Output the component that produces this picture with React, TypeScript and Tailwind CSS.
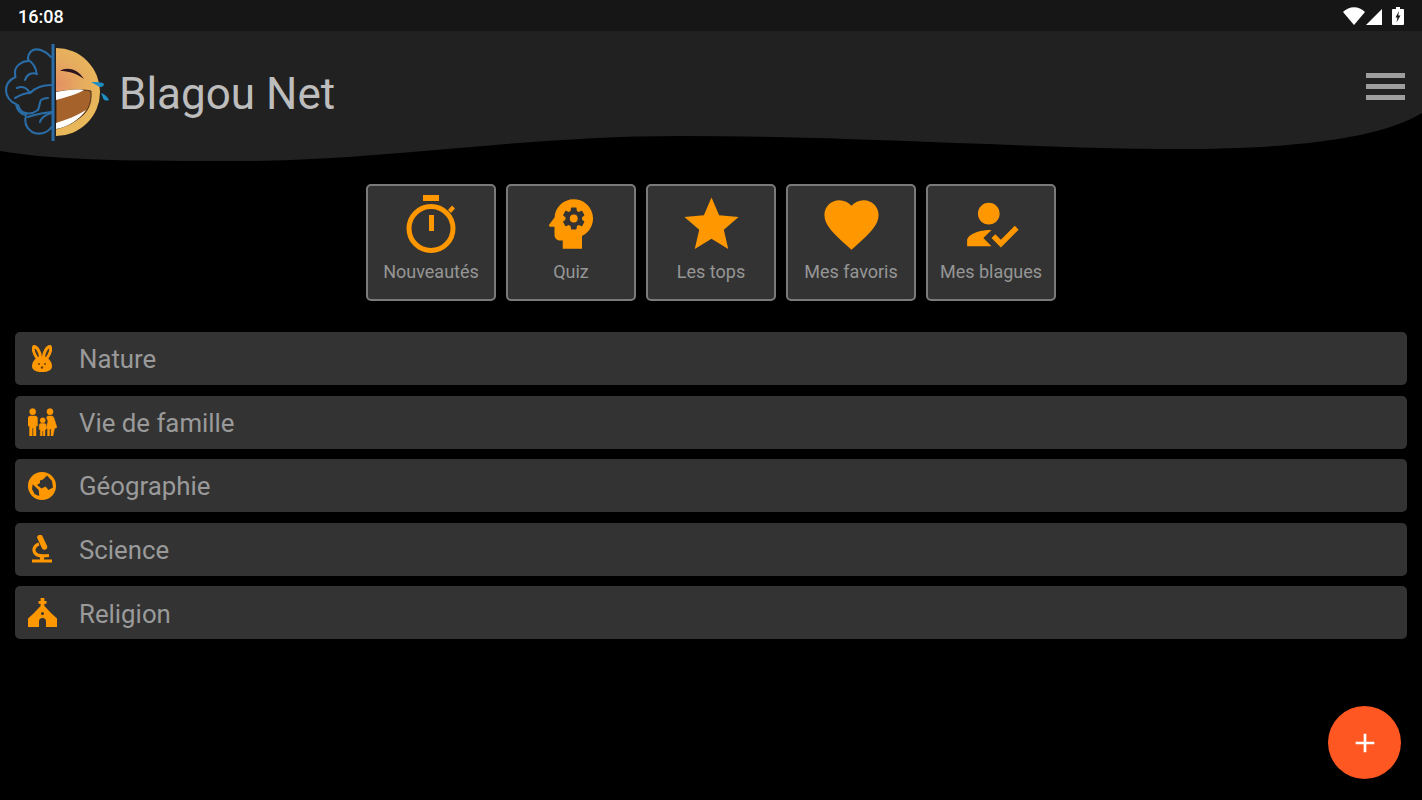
import { MdAdd, MdFavorite, MdHowToReg, MdPsychology, MdStar } from 'react-icons/md';

function Logo() {
  return (
    <svg width="120" height="115" viewBox="0 0 120 115" fill="none">
      <defs>
        <radialGradient id="cheek" cx="56" cy="50" r="46" gradientUnits="userSpaceOnUse">
          <stop offset="0" stopColor="#e38f63" />
          <stop offset="0.55" stopColor="#e6ab5f" />
          <stop offset="1" stopColor="#e9b85a" />
        </radialGradient>
      </defs>
      {/* brain */}
      <g stroke="#2a6ca6" strokeWidth="2.1" strokeLinecap="round" strokeLinejoin="round">
        <path d="M51 22C46 16 38 13 33 15C29 17 27 22 28.5 26C22 26 15 31 15 37C15 39 15 41 15.5 42C9 45 6 50 6 55C6 61 10 67 16 69C17 75 21 79 26 80C24 87 26 93 32 97C38 100 47 99 51.5 92" />
        <path d="M28.5 25C33 28 36 32 36.7 39" />
        <path d="M36.7 39C32 37 27 39 25 45" />
        <path d="M51.5 50C42 50 35 53 30 58C28 54 23 50 17 53" />
        <path d="M30 58C25 58 20 60 15 63" />
        <path d="M18 70C20 79 30 81 38 75C40 70 40 66 41 65C44 63 46 63 48 63" />
        <path d="M51.5 77C44 78 35 79 28 82" />
        <path d="M51.5 78C45 80 41 83 40 87" />
      </g>
      <path d="M53 9V106" stroke="#2a6ca6" strokeWidth="3" />
      {/* face */}
      <path d="M56 13A44 44 0 0 1 56 101Z" fill="url(#cheek)" />
      <path d="M56 57C70 55 82 54 91 56C92 70 87 78 78 84C70 90 63 92 56 94Z" fill="#a5622a" stroke="#2a1a10" strokeWidth="0.8" />
      <path d="M56 57C66 55 76 54 84 55C76 60 66 62 56 65Z" fill="#fff" />
      <path d="M56 88C66 85 76 81 86 75C80 84 68 92 56 94Z" fill="#fff" />
      <path d="M60 36C66 32 77 33 84 44C76 38 68 36 60 36Z" fill="#2a1420" />
      {/* tears */}
      <path d="M91 47C96 47 102 47 104 49C104 52 100 53 98 51Z" fill="#1d8fc4" />
      <path d="M101 58C104 59 108 62 109 65C107 66 104 66 103 63Z" fill="#1d8fc4" />
    </svg>
  );
}

function Stopwatch() {
  return (
    <svg width="52" height="58" viewBox="0 0 52 58" fill="#ff9800">
      <rect x="18" y="0" width="16" height="6" />
      <circle cx="26" cy="33.5" r="22" fill="none" stroke="#ff9800" strokeWidth="5" />
      <rect x="24" y="20" width="5" height="16" />
      <path d="M43 15L47 10.5L50 13.5L46 18Z" />
    </svg>
  );
}

function Rabbit() {
  return (
    <svg width="20" height="27" viewBox="0 0 20 27" fill="none">
      <path d="M5.5 14C2 9 0.5 4 2 1.5C5 1.5 8 7 8.5 12M14.5 14C18 9 19.5 4 18 1.5C15 1.5 12 7 11.5 12" stroke="#ff9800" strokeWidth="3" />
      <path d="M10 11C15 11 20 16 20 21C20 25 16 27 10 27C4 27 0 25 0 21C0 16 5 11 10 11Z" fill="#ff9800" />
      <circle cx="7" cy="19" r="1" fill="#6b4300" />
      <circle cx="13" cy="19" r="1" fill="#6b4300" />
      <circle cx="10" cy="22.5" r="1.2" fill="#6b4300" />
    </svg>
  );
}

function Family() {
  return (
    <svg width="29" height="28" viewBox="0 0 29 28" fill="#ff9800" stroke="#ff9800" strokeWidth="0.4">
      <circle cx="4.7" cy="3.7" r="3.1" />
      <path d="M1.5 8H8L9.5 9.5V18H8V28H5.3V20H4.2V28H1.5V18H0V9.5Z" />
      <circle cx="14.7" cy="12.3" r="2.6" />
      <path d="M12.3 15.5H17L18 16.5V21.5H17V28H15.2V23H14.2V28H12.3V21.5H11.2V16.5Z" />
      <circle cx="22" cy="3.7" r="3.1" />
      <path d="M19.5 8H24.5L26 10L29 19.5L26.5 20.5L25 28H23V21H21.5V28H19.5V20.5H18L20 13L18.5 10Z" />
    </svg>
  );
}

function Globe() {
  return (
    <svg width="28" height="28" viewBox="0 0 28 28">
      <circle cx="14" cy="14" r="14" fill="#ff9800" />
      <path d="M12 8.5L15 7.5L19 3.5L24 9L25 15.5L20.5 18L17.5 14.5L13.5 16.5L9 13L12 11Z" fill="#333333" />
      <path d="M4.7 12.3L10.7 18L11.3 24L6.7 22.3L4 17Z" fill="#333333" />
    </svg>
  );
}

function Microscope() {
  return (
    <svg width="20" height="28" viewBox="0 0 20 28" fill="none">
      <path d="M7 9C2 10.5 1 15 3 18C5 21 10 21.5 17 20.5" stroke="#ff9800" strokeWidth="3.2" />
      <path d="M8 2.5L12.5 12" stroke="#ff9800" strokeWidth="5.5" strokeLinecap="round" />
      <rect x="8" y="20" width="4" height="5" fill="#ff9800" />
      <rect x="0" y="24.5" width="20" height="3" fill="#ff9800" />
    </svg>
  );
}

function Church() {
  return (
    <svg width="29" height="29" viewBox="0 0 29 29">
      <path d="M12.6 0H16.4V3H18.5V5.8H16.4V8L23 15L29 20.5V29H0V20.5L6 15L12.6 8V5.8H10.5V3H12.6Z" fill="#ff9800" />
      <path d="M11 29V23.5A3.5 3.5 0 0 1 18 23.5V29Z" fill="#333333" />
      <circle cx="14.5" cy="15.5" r="1.5" fill="#333333" />
    </svg>
  );
}

function StatusIcons() {
  return (
    <div className="flex items-center">
      <svg width="22" height="18" viewBox="0 0 22 18" fill="#fff">
        <path d="M0 5C6 -1.5 16 -1.5 22 5L11 18Z" />
      </svg>
      <svg width="17" height="16" viewBox="0 0 17 16" fill="#fff" className="ml-[1px] mt-[1px]">
        <path d="M16 0V16H0Z" />
      </svg>
      <svg width="12" height="18" viewBox="0 0 12 18" className="ml-[9px]">
        <path d="M4 0H8V2H11A1 1 0 0 1 12 3V17A1 1 0 0 1 11 18H1A1 1 0 0 1 0 17V3A1 1 0 0 1 1 2H4Z" fill="#fff" />
        <path d="M7 4L3.5 10.5H5.5L4.5 15.5L8.5 8.5H6.3Z" fill="#161616" />
      </svg>
    </div>
  );
}

const shortcuts = [
  { label: 'Nouveautés', icon: <Stopwatch /> },
  { label: 'Quiz', icon: <MdPsychology size={66} color="#ff9800" /> },
  { label: 'Les tops', icon: <MdStar size={65} color="#ff9800" /> },
  { label: 'Mes favoris', icon: <MdFavorite size={65} color="#ff9800" /> },
  { label: 'Mes blagues', icon: <MdHowToReg size={65} color="#ff9800" /> },
];

const categories = [
  { label: 'Nature', icon: <Rabbit /> },
  { label: 'Vie de famille', icon: <Family /> },
  { label: 'Géographie', icon: <Globe /> },
  { label: 'Science', icon: <Microscope /> },
  { label: 'Religion', icon: <Church /> },
];

export default function App() {
  return (
    <div className="relative w-[1422px] h-[800px] overflow-hidden bg-black font-['Roboto',sans-serif]">
      {/* Status bar */}
      <div className="h-[31px] bg-[#161616] flex items-center justify-between pl-[18px] pr-[18px] pt-[1px]">
        <span className="text-[18px] font-medium text-white">16:08</span>
        <StatusIcons />
      </div>

      {/* Header */}
      <header className="relative h-[130px] pt-[4px]">
        <svg className="absolute inset-0" width="1422" height="130" viewBox="0 0 1422 130">
          <path d="M0 0H1422V82C1380 108 1290 118 1180 118C1040 118 860 105 680 105C520 105 380 130 240 130C140 130 60 130 0 120Z" fill="#212121" />
        </svg>
        <div className="relative flex items-center h-[115px]">
          <Logo />
          <h1 className="text-[44px] leading-none text-[#bdbdbd] -ml-[1px] mt-[2px]">Blagou Net</h1>
          <div className="ml-auto mr-[17px] mb-[13px] flex flex-col gap-[6px]">
            <div className="w-[39px] h-[5px] bg-[#9e9e9e]" />
            <div className="w-[39px] h-[5px] bg-[#9e9e9e]" />
            <div className="w-[39px] h-[5px] bg-[#9e9e9e]" />
          </div>
        </div>
      </header>

      {/* Shortcuts */}
      <div className="flex justify-center gap-[10px] mt-[23px]">
        {shortcuts.map((s) => (
          <div key={s.label} className="w-[130px] h-[117px] rounded-[5px] border-2 border-[#7a7a7a] bg-[#333333] flex flex-col items-center">
            <div className="h-[72px] flex items-center justify-center shrink-0 pt-[4px]">{s.icon}</div>
            <span className="text-[18px] leading-5 text-[#969696] mt-[4px]">{s.label}</span>
          </div>
        ))}
      </div>

      {/* Categories */}
      <div className="flex flex-col gap-[10.6px] mx-[15px] mt-[31px]">
        {categories.map((c) => (
          <div key={c.label} className="h-[53px] rounded-[5px] bg-[#333333] flex items-center">
            <div className="w-[54px] flex justify-center shrink-0">{c.icon}</div>
            <span className="ml-[10px] pt-[2px] text-[25.8px] text-[#9a9a9a]">{c.label}</span>
          </div>
        ))}
      </div>

      {/* FAB */}
      <button className="absolute left-[1328px] top-[706px] w-[73px] h-[73px] rounded-full bg-[#ff5722] flex items-center justify-center">
        <MdAdd size={32} color="#fff" />
      </button>
    </div>
  );
}
